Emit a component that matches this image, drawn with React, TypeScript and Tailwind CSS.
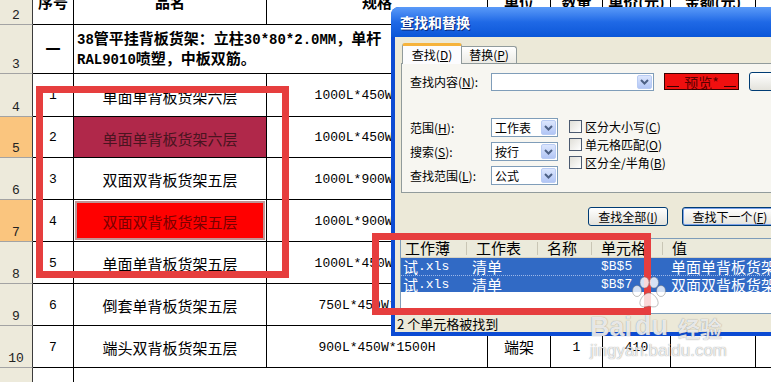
import React from "react";

const CJK = "font-['Noto_Sans_CJK_SC',sans-serif]";
const MONO = "font-['Liberation_Mono','Noto_Sans_CJK_SC',monospace]";

function M({ children }: { children: React.ReactNode }) {
  return <span className={`${MONO} text-[13px]`}>{children}</span>;
}

function MB({ children }: { children: React.ReactNode }) {
  return <span className={`${MONO} text-[14px]`}>{children}</span>;
}

function RH({ n, orange, last }: { n?: string; orange?: boolean; last?: boolean }) {
  return (
    <div
      className={`w-[33px] shrink-0 border-r border-r-[#3c3c3c] ${last ? "" : "border-b border-b-[#A3A3A3]"} ${
        orange ? "bg-[#FAC57E]" : "bg-[#EDEADB]"
      } flex items-end justify-center pb-[2px]`}
    >
      <span className={`${MONO} text-[13px] leading-[13px] text-[#222]`}>{n}</span>
    </div>
  );
}

const CELL = "shrink-0 border-r border-b border-black flex items-center justify-center";
const HCELL = "shrink-0 border-r border-b border-black flex items-start justify-center overflow-hidden";
const HT = "-mt-[6px] font-bold text-[15px] leading-[15px] whitespace-nowrap";

type Row = {
  n: string;
  h: string;
  a: string;
  b: string;
  c: string;
  d?: string;
  e?: string;
  f?: string;
  sel?: boolean;
  style?: "maroon" | "red";
};

const rows: Row[] = [
  { n: "4", h: "h-[43px]", a: "1", b: "单面单背板货架六层", c: "1000L*450W*2000H" },
  { n: "5", h: "h-[41px]", a: "2", b: "单面单背板货架六层", c: "1000L*450W*2000H", sel: true, style: "maroon" },
  { n: "6", h: "h-[42px]", a: "3", b: "双面双背板货架五层", c: "1000L*900W*2000H" },
  { n: "7", h: "h-[42px]", a: "4", b: "双面双背板货架五层", c: "1000L*900W*2000H", sel: true, style: "red" },
  { n: "8", h: "h-[42px]", a: "5", b: "单面单背板货架五层", c: "1000L*450W*2000H" },
  { n: "9", h: "h-[42px]", a: "6", b: "倒套单背板货架五层", c: "750L*450W*2000H" },
  { n: "10", h: "h-[42px]", a: "7", b: "端头双背板货架五层", c: "900L*450W*1500H", d: "端架", e: "1", f: "410" },
];

function BCell({ r }: { r: Row }) {
  if (r.style === "red") {
    return (
      <div className={`w-[193px] ${CELL} p-px items-stretch`}>
        <div className="flex-1 border-2 border-[#C09494] bg-[#FF0000] flex items-center justify-center pt-[2px]">
          <span className="text-[15px] leading-[15px] text-[#7A0000]">{r.b}</span>
        </div>
      </div>
    );
  }
  return (
    <div className={`w-[193px] ${CELL} pt-[2px] ${r.style === "maroon" ? "bg-[#B0284A]" : ""}`}>
      <span className={`text-[15px] leading-[15px] ${r.style === "maroon" ? "text-[#4A1420]" : ""}`}>{r.b}</span>
    </div>
  );
}

function Sheet() {
  return (
    <div className="flex flex-col w-[771px] h-[382px]">
      <div className="flex h-[25px] shrink-0">
        <RH n="2" />
        <div className={`w-[41px] ${HCELL}`}><span className={HT}>序号</span></div>
        <div className={`w-[193px] ${HCELL}`}><span className={HT}>品名</span></div>
        <div className={`w-[221px] ${HCELL}`}><span className={HT}>规格</span></div>
        <div className={`w-[63px] ${HCELL}`}><span className={HT}>单位</span></div>
        <div className={`w-[52px] ${HCELL}`}><span className={HT}>数量</span></div>
        <div className={`w-[68px] ${HCELL}`}><span className={HT}>单价(元)</span></div>
        <div className={`w-[85px] ${HCELL}`}><span className={HT}>金额(元)</span></div>
        <div className="flex-1 border-b border-black" />
      </div>
      <div className="flex h-[49px] shrink-0">
        <RH n="3" />
        <div className={`w-[41px] ${CELL}`}><span className="font-bold text-[15px]">一</span></div>
        <div className="flex-1 border-b border-black flex flex-col justify-center pl-[3px] overflow-hidden font-bold text-[15px] leading-[18px] whitespace-nowrap">
          <div>
            <MB>38</MB>管平挂背板货架：立柱<MB>30*80*2.0MM</MB>，单杆
          </div>
          <div>
            <MB>RAL9010</MB>喷塑，中板双筋。
          </div>
        </div>
      </div>
      {rows.map((r) => (
        <div key={r.n} className={`flex ${r.h} shrink-0`}>
          <RH n={r.n} orange={r.sel} />
          <div className={`w-[41px] ${CELL} pt-[2px]`}>
            <span className={`${MONO} text-[13px]`}>{r.a}</span>
          </div>
          <BCell r={r} />
          <div className={`w-[221px] ${CELL} pt-[2px]`}>
            <span className={`${MONO} text-[13px] whitespace-nowrap`}>{r.c}</span>
          </div>
          <div className={`w-[63px] ${CELL} pt-[2px]`}>
            <span className="text-[15px]">{r.d}</span>
          </div>
          <div className={`w-[52px] ${CELL} pt-[2px]`}>
            <span className={`${MONO} text-[13px]`}>{r.e}</span>
          </div>
          <div className={`w-[68px] ${CELL} pt-[2px]`}>
            <span className={`${MONO} text-[13px]`}>{r.f}</span>
          </div>
          <div className={`w-[85px] ${CELL}`} />
          <div className="flex-1 border-b border-black" />
        </div>
      ))}
      <div className="flex flex-1">
        <RH last />
        <div className="w-[41px] shrink-0 border-r border-black" />
        <div className="flex-1" />
      </div>
    </div>
  );
}

function DropBtn() {
  return (
    <div className="w-[15px] shrink-0 my-px mr-px rounded-[2px] border border-[#B9CCF4] bg-linear-to-b from-[#DCE6FD] to-[#B2C6F5] flex items-center justify-center">
      <svg width="9" height="6" viewBox="0 0 9 6">
        <path d="M1 1 L4.5 4.5 L8 1" fill="none" stroke="#4D6185" strokeWidth="2" />
      </svg>
    </div>
  );
}

function Sel({ v }: { v: string }) {
  return (
    <div className="w-[67px] h-[19px] bg-white border border-[#7F9DB9] flex">
      <span className="flex-1 pl-[3px] text-[12px] leading-[17px]">{v}</span>
      <DropBtn />
    </div>
  );
}

function U({ c }: { c: string }) {
  return (
    <>
      (<span className="underline underline-offset-1">{c}</span>)
    </>
  );
}

function Check({ label, k }: { label: string; k: string }) {
  return (
    <div className="h-[13px] flex items-center gap-[3px]">
      <div className="w-[13px] h-[13px] border border-[#4B5A70] bg-linear-to-br from-[#E0DFD8] to-white" />
      <span className="text-[12px] leading-[13px] whitespace-nowrap">
        {label}
        <U c={k} />
      </span>
    </div>
  );
}

function XPBtn({ w, children, def }: { w: string; children: React.ReactNode; def?: boolean }) {
  return (
    <div
      className={`${w} h-[19px] shrink-0 rounded-[3px] border border-[#003C74] bg-linear-to-b from-white to-[#E4E3DC] flex items-center justify-center text-[12px] whitespace-nowrap ${
        def ? "shadow-[inset_0_0_0_1px_#7DA2E8]" : ""
      }`}
    >
      {children}
    </div>
  );
}

function Dialog() {
  const colW = ["w-[66px]", "w-[71px]", "w-[54px]", "w-[71px]"];
  return (
    <div className="absolute left-[391px] top-[7px] w-[540px] h-[329px] flex flex-col rounded-tl-[8px] overflow-hidden bg-[#0C4BD3]">
      <div className="h-[30px] shrink-0 flex items-center pl-[9px] bg-linear-to-b from-[#5A9AF8] via-[#1F69E6] to-[#0A56D8]">
        <span className="text-[14px] font-bold text-white leading-none [text-shadow:1px_1px_0_#0A2A7A]">查找和替换</span>
      </div>
      <div className="flex-1 ml-[4px] mb-[4px] bg-[#ECE9D8] flex flex-col text-black">
        <div className="h-[26px] shrink-0 flex items-end pl-[7px]">
          <div className="relative z-10 -mb-px w-[60px] h-[21px] bg-[#FCFCFE] border border-b-0 border-[#919B9C] border-t-[3px] border-t-[#F6B33C] rounded-t-[3px] flex items-center justify-center text-[12px]">
            查找<U c="D" />
          </div>
          <div className="w-[55px] h-[17px] bg-linear-to-b from-white to-[#ECEBE5] border border-b-0 border-l-0 border-[#919B9C] rounded-tr-[3px] flex items-center justify-center text-[12px]">
            替换<U c="P" />
          </div>
        </div>
        <div className="ml-[6px] h-[130px] shrink-0 border border-[#919B9C] bg-[#F7F6F1] flex flex-col pt-[8px] pl-[8px]">
          <div className="flex items-center h-[19px]">
            <span className="w-[81px] shrink-0 text-[12px] whitespace-nowrap">
              查找内容<U c="N" />:
            </span>
            <div className="w-[163px] h-[18px] shrink-0 bg-white border border-[#7F9DB9] flex justify-end">
              <DropBtn />
            </div>
            <div className="ml-[10px] w-[75px] h-[17px] shrink-0 border border-[#3A0000] bg-[#F00F0F] flex items-center justify-between px-[2px]">
              <div className="w-[12px] h-px bg-[#3A0000] self-end mb-[2px]" />
              <span className="text-[14px] leading-none text-[#5A0000]">预览*</span>
              <div className="w-[12px] h-px bg-[#3A0000] self-end mb-[2px]" />
            </div>
            <div className="ml-[10px] shrink-0">
              <XPBtn w="w-[150px]">格式(M)...</XPBtn>
            </div>
          </div>
          <div className="flex mt-[27px]">
            <div className="flex flex-col gap-[5px]">
              <div className="flex items-center h-[19px]">
                <span className="w-[81px] text-[12px]">范围<U c="H" />:</span>
                <Sel v="工作表" />
              </div>
              <div className="flex items-center h-[19px]">
                <span className="w-[81px] text-[12px]">搜索<U c="S" />:</span>
                <Sel v="按行" />
              </div>
              <div className="flex items-center h-[19px]">
                <span className="w-[81px] text-[12px]">查找范围<U c="L" />:</span>
                <Sel v="公式" />
              </div>
            </div>
            <div className="ml-[11px] mt-[2px] flex flex-col gap-[5px]">
              <Check label="区分大小写" k="C" />
              <Check label="单元格匹配" k="O" />
              <Check label="区分全/半角" k="B" />
            </div>
          </div>
        </div>
        <div className="mt-[14px] pl-[193px] flex gap-[14px]">
          <XPBtn w="w-[80px]">
            查找全部<U c="I" />
          </XPBtn>
          <XPBtn w="w-[96px]" def>
            查找下一个<U c="F" />
          </XPBtn>
        </div>
        <div className="mt-[12px] ml-[5px] h-[76px] shrink-0 border border-[#7F9DB9] bg-white flex flex-col">
          <div className="h-[19px] shrink-0 flex bg-[#EBEADB] border-b border-[#D6D2C2] text-[15px] leading-[18px]">
            {["工作薄", "工作表", "名称", "单元格"].map((t, i) => (
              <div key={t} className={`${colW[i]} shrink-0 flex items-center justify-between ${i === 0 ? "pl-[4px]" : "pl-[9px]"}`}>
                <span className="whitespace-nowrap">{t}</span>
                <div className="w-px h-[13px] bg-[#C9C6B5]" />
              </div>
            ))}
            <div className="flex-1 pl-[9px] flex items-center">值</div>
          </div>
          {[
            { c: "$B$5", v: "单面单背板货架六层", focus: false },
            { c: "$B$7", v: "双面双背板货架五层", focus: true },
          ].map((r) => (
            <div
              key={r.c}
              className={`h-[17px] shrink-0 flex bg-[#316AC5] text-white text-[15px] leading-[15px] whitespace-nowrap ${
                r.focus ? "border-t border-dotted border-[#9DB8E8]" : ""
              }`}
            >
              <div className="w-[66px] shrink-0 pl-[2px] flex items-center">
                试<M>.xls</M>
              </div>
              <div className="w-[71px] shrink-0 pl-[5px] flex items-center">清单</div>
              <div className="w-[54px] shrink-0" />
              <div className="w-[71px] shrink-0 pl-[9px] flex items-center">
                <M>{r.c}</M>
              </div>
              <div className="flex-1 pl-[8px] flex items-center">{r.v}</div>
            </div>
          ))}
        </div>
        <div className="h-[18px] shrink-0 flex items-center pl-[2px] text-[13px] leading-none">
          2 个单元格被找到
        </div>
      </div>
    </div>
  );
}

function Watermark() {
  const ws = "text-[rgba(255,255,255,0.82)] [text-shadow:0_0_1px_rgba(90,90,90,0.75)]";
  return (
    <div className="absolute left-[590px] top-[300px] flex flex-col">
      <div className="flex items-end h-[40px]">
        <span className={`font-['Liberation_Sans',sans-serif] font-bold text-[27px] leading-[26px] ${ws}`}>Bai</span>
        <div className="relative">
          <svg className="absolute left-[-2px] top-[-37px]" width="38" height="34" viewBox="0 0 38 34">
            <g fill="rgba(255,255,255,0.8)" stroke="rgba(110,110,110,0.55)" strokeWidth="0.8">
              <ellipse cx="7" cy="15" rx="4.5" ry="5.5" />
              <ellipse cx="14.5" cy="6.5" rx="4.5" ry="5.5" />
              <ellipse cx="24" cy="6.5" rx="4.5" ry="5.5" />
              <ellipse cx="31" cy="15" rx="4.5" ry="5.5" />
              <path d="M19 17 C24 17 29 24 28 28 C27 32 22 31 19 30 C16 31 11 32 10 28 C9 24 14 17 19 17 Z" />
            </g>
          </svg>
          <span className={`relative font-['Liberation_Sans',sans-serif] font-bold text-[27px] leading-[26px] ml-[3px] ${ws}`}>du</span>
        </div>
        <span className={`ml-[10px] font-bold text-[22px] leading-[26px] ${ws}`}>经验</span>
      </div>
      <span className={`mt-[1px] font-['Liberation_Sans',sans-serif] text-[17px] leading-[20px] ${ws}`}>jingyan.baidu.com</span>
    </div>
  );
}

export default function App() {
  return (
    <div className={`relative w-[771px] h-[382px] overflow-hidden bg-white text-black ${CJK}`}>
      <Sheet />
      <Dialog />
      <div className="absolute left-[36px] top-[86px] w-[253px] h-[192px] border-[7px] border-[#E63E3E]" />
      <div className="absolute left-[372px] top-[233px] w-[279px] h-[82px] border-[7px] border-[#E63E3E]" />
      <Watermark />
    </div>
  );
}
